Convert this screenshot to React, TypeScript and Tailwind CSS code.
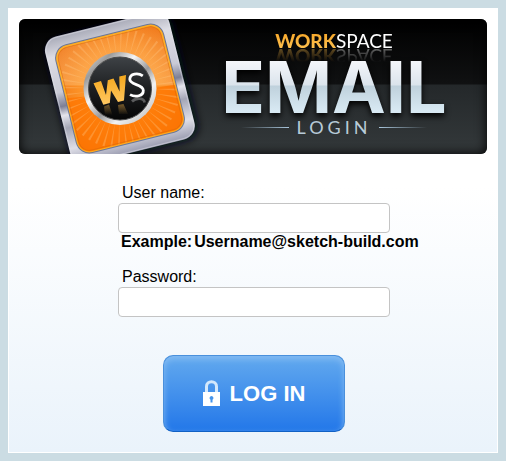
import type { FormEvent } from 'react';

// 48 thin rays fanned around the badge
const rays = Array.from({ length: 48 }, (_, i) => i * 7.5);

function WorkspaceLogo() {
  return (
    <svg
      viewBox="27 19 168 135"
      className="w-[168px] h-[135px] shrink-0 overflow-visible"
      role="img"
      aria-label="Workspace"
    >
      <defs>
        <linearGradient id="frame" x1="0" y1="0" x2="0" y2="1">
          <stop offset="0" stopColor="#a9abb8" />
          <stop offset="0.15" stopColor="#dcdce4" />
          <stop offset="0.42" stopColor="#c9cad6" />
          <stop offset="0.53" stopColor="#7d7f94" />
          <stop offset="0.6" stopColor="#e4e4ec" />
          <stop offset="0.7" stopColor="#a4a6b6" />
          <stop offset="0.86" stopColor="#dedee7" />
          <stop offset="1" stopColor="#9a9cb0" />
        </linearGradient>
        <radialGradient id="orange" cx="0.5" cy="0.5" r="0.72">
          <stop offset="0" stopColor="#ffa63c" />
          <stop offset="0.55" stopColor="#fb9127" />
          <stop offset="1" stopColor="#ee6d0b" />
        </radialGradient>
        <linearGradient id="gloss" x1="0" y1="0" x2="0" y2="1">
          <stop offset="0" stopColor="#ffffff" stopOpacity="0.02" />
          <stop offset="1" stopColor="#ffd9a0" stopOpacity="0.3" />
        </linearGradient>
        <linearGradient id="ring" x1="0" y1="0" x2="1" y2="1">
          <stop offset="0" stopColor="#f4f4f4" />
          <stop offset="0.2" stopColor="#9b9b9b" />
          <stop offset="0.38" stopColor="#f4f4f4" />
          <stop offset="0.55" stopColor="#9a9a9c" />
          <stop offset="0.7" stopColor="#f2f2f2" />
          <stop offset="1" stopColor="#adadad" />
        </linearGradient>
        <linearGradient id="disc" x1="0" y1="0" x2="0" y2="1">
          <stop offset="0" stopColor="#3e4246" />
          <stop offset="0.5" stopColor="#1d1f21" />
          <stop offset="1" stopColor="#050505" />
        </linearGradient>
        <linearGradient id="wLetter" x1="0" y1="0" x2="0" y2="1">
          <stop offset="0" stopColor="#f5a81c" />
          <stop offset="1" stopColor="#ffc862" />
        </linearGradient>
        <linearGradient id="wMirror" x1="0" y1="0" x2="0" y2="1">
          <stop offset="0" stopColor="#a37a35" stopOpacity="0.7" />
          <stop offset="1" stopColor="#a37a35" stopOpacity="0" />
        </linearGradient>
        <clipPath id="tile">
          <rect x="-54" y="-54" width="108" height="108" rx="12" />
        </clipPath>
        <filter id="glow" x="-20%" y="-20%" width="140%" height="140%">
          <feGaussianBlur stdDeviation="4" />
        </filter>
      </defs>

      <g transform="translate(120 88.5) rotate(-14)">
        <rect x="-64" y="-65" width="131" height="132" rx="15" fill="#000814" filter="url(#glow)" />
        <rect x="-64" y="-66" width="128" height="131" rx="14" fill="url(#frame)" />
        <rect x="-63" y="-65" width="126" height="129" rx="13" fill="none" stroke="#e4e4ec" strokeOpacity="0.5" />
        <rect x="-56" y="-56" width="112" height="112" rx="14" fill="#6b7798" />
        <rect x="-55" y="-55" width="110" height="110" rx="13" fill="#ffab1e" />
        <rect x="-53" y="-53" width="106" height="106" rx="11" fill="url(#orange)" />
        <g clipPath="url(#tile)">
          <g transform="rotate(14)">
            <rect x="-80" y="-70" width="160" height="67" fill="url(#gloss)" />
            <path d="M-80 12 Q0 6 80 -8 V90 H-80 Z" fill="#ff7600" fillOpacity="0.75" />
          </g>
          {rays.map((angle) => (
            <path key={angle} d="M0 -34 L-1.1 -60 L1.1 -60 Z" fill="#ffc98a" fillOpacity="0.32" transform={`rotate(${angle})`} />
          ))}
        </g>
        <rect x="-53" y="-53" width="106" height="106" rx="11" fill="none" stroke="#d96508" strokeOpacity="0.55" />
      </g>

      <circle cx="120" cy="88.5" r="36.5" fill="url(#ring)" />
      <circle cx="120" cy="88.5" r="31.5" fill="url(#disc)" stroke="#4b4b4b" />
      {/* W and S monogram, with a faint mirror under it */}
      <path d="M93.5 83.3 L101 81 L106 95 L107.8 80.2 L113.5 78.6 L119.6 91.5 L119.3 76.6 L126 75 L124 100.5 L118 102 L111 90.5 L109.8 103 L103.3 104.7 Z" fill="url(#wLetter)" />
      <path d="M104 106.5 L109 104.5 L112.5 115 H105 Z M118 105 L123.5 104 L128 114 H119 Z" fill="url(#wMirror)" />
      <path d="M142.8 75.8 C138 72.5 129.8 73.4 129.8 79.3 C129.8 85.3 143 83.8 143.3 90.2 C143.6 96 135.5 97.7 130 94.6" fill="none" stroke="#ffffff" strokeWidth="2.8" />
      <path d="M132 101.5 C136 97.5 144 97.5 144.6 102.5" fill="none" stroke="#ffffff" strokeOpacity="0.3" strokeWidth="2.6" />
    </svg>
  );
}

function Banner() {
  return (
    <header className="flex h-[135px] overflow-hidden rounded-md bg-[linear-gradient(#000_0,#101112_65px,#24282a_66px,#34393b_135px)] pl-2 font-['Lato',sans-serif] shadow-[inset_0_0_12px_#000]">
      <WorkspaceLogo />
      <div className="flex flex-1 flex-col items-center pt-3 pr-[14px]">
        <p className="text-[19px] leading-5 text-white [-webkit-box-reflect:below_-5px_linear-gradient(transparent_20%,rgba(255,255,255,0.45))]">
          <span className="bg-linear-to-b from-[#f5a11a] to-[#ffc655] bg-clip-text font-black text-transparent">WORK</span>
          <span>SPACE</span>
        </p>
        <h1 className="-mb-1 bg-[linear-gradient(#f4f6fa_10px,#dbe4ec_34px,#bfd1dc_35px,#d8e9f3_60px)] bg-clip-text font-['Inter',sans-serif] text-[72px] leading-[72px] font-bold text-transparent drop-shadow-[0_3px_3px_#000]">
          EMAIL
        </h1>
        <div className="flex items-center gap-2 text-[18px] leading-4 text-[#b8cbd8]">
          <span className="h-px w-12 bg-linear-to-r from-transparent to-[#a9c6dc]" />
          <span className="tracking-[4px]">LOGIN</span>
          <span className="h-px w-12 bg-linear-to-l from-transparent to-[#a9c6dc]" />
        </div>
      </div>
    </header>
  );
}

function LockIcon() {
  return (
    <svg viewBox="0 0 17 27" className="h-[27px] w-[17px]" aria-hidden="true">
      <path d="M3.5 13 V6.5 C3.5 0 13.5 0 13.5 6.5 V13" fill="none" stroke="#d3e8fc" strokeWidth="3" />
      <rect y="12" width="17" height="14" fill="#ffffff" />
      <path d="M8.5 16 a2 2 0 0 1 1 3.7 V22.5 H7.5 V19.7 A2 2 0 0 1 8.5 16 Z" fill="#4594eb" />
    </svg>
  );
}

const inputClass =
  'block h-[30px] w-full rounded-[4px] border border-[#c4c4c4] bg-white px-2 text-base text-black outline-none focus:border-[#4a94ea]';

export default function App() {
  const handleSubmit = (event: FormEvent) => {
    event.preventDefault();
  };

  return (
    <div className="min-h-screen bg-[#cbdce3] p-2 font-['Liberation_Sans',Arial,sans-serif] text-base text-black">
      <main className="border border-white bg-[linear-gradient(#fff_40%,#eaf3fb)] px-[10px] pt-[10px] pb-5">
        <Banner />

        <form onSubmit={handleSubmit} className="mx-auto mt-7 w-[274px] pl-[2px]">
          <label htmlFor="username" className="block pl-1 leading-[21px]">
            User name:
          </label>
          <input id="username" type="text" className={inputClass} />
          <p className="flex gap-[2px] pl-[3px] leading-[18px] font-bold whitespace-nowrap">
            <span>Example:</span>
            <span>Username@sketch-build.com</span>
          </p>

          <label htmlFor="password" className="mt-[15px] block pl-1 leading-[21px]">
            Password:
          </label>
          <input id="password" type="password" className={inputClass} />

          <button
            type="submit"
            className="mx-auto mt-[38px] flex h-[77px] w-[182px] items-center justify-center gap-[10px] rounded-[10px] border border-[#4a90dc] border-b-[#1261c4] bg-linear-to-b from-[#62a9ee] to-[#2277e9] text-[22px] font-bold text-white shadow-[inset_0_3px_6px_#84bbf2]"
          >
            <LockIcon />
            <span>LOG IN</span>
          </button>
        </form>
      </main>
    </div>
  );
}
